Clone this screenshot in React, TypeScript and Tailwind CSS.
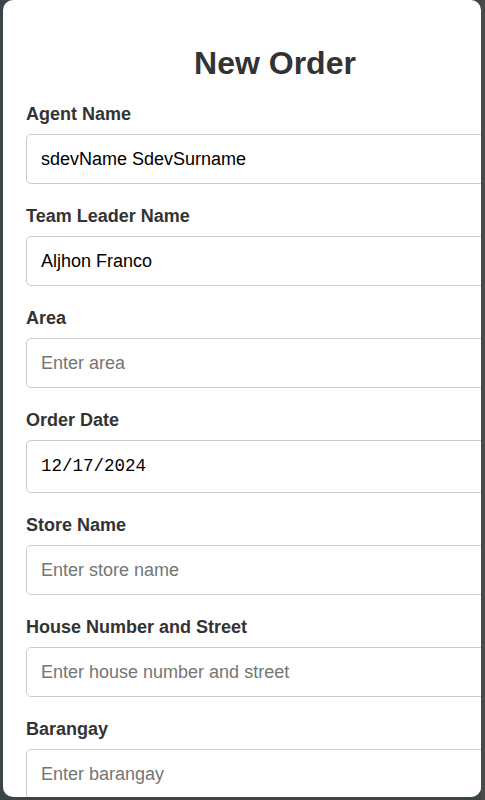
import React from "react";

const fields: { label: string; value?: string; placeholder?: string; date?: boolean }[] = [
  { label: "Agent Name", value: "sdevName SdevSurname" },
  { label: "Team Leader Name", value: "Aljhon Franco" },
  { label: "Area", placeholder: "Enter area" },
  { label: "Order Date", value: "12/17/2024", date: true },
  { label: "Store Name", placeholder: "Enter store name" },
  { label: "House Number and Street", placeholder: "Enter house number and street" },
  { label: "Barangay", placeholder: "Enter barangay" },
];

export default function App() {
  return (
    <div className="flex h-[800px] w-[485px] overflow-hidden bg-[#3b4547]">
      <div className="w-[3px] shrink-0" />
      <div className="relative h-[797px] w-[478px] shrink-0 overflow-hidden rounded-[10px] bg-white">
        <div className="w-[521px] pl-[23px] pt-[45px] font-['Liberation_Sans']">
          <h2 className="mb-[21px] text-center text-[32px] font-bold leading-[37px] text-[#333]">New Order</h2>
          {fields.map((f) => (
            <div key={f.label} className="mb-[21px]">
              <label className="mb-[9px] block text-[18px] font-bold leading-[22px] text-[#333]">{f.label}</label>
              {f.date ? (
                <div className="flex h-[53px] w-[498px] items-center rounded-[5px] border border-[#ccc] bg-white px-[14px] font-['Liberation_Mono'] text-[17.5px] text-black">
                  {f.value}
                </div>
              ) : (
                <input
                  readOnly
                  value={f.value ?? ""}
                  placeholder={f.placeholder}
                  className="block h-[50px] w-[498px] rounded-[5px] border border-[#ccc] bg-white px-[14px] font-['Liberation_Sans'] text-[18px] text-black outline-none placeholder:text-[#757575]"
                />
              )}
            </div>
          ))}
        </div>
      </div>
      <div className="h-full w-[4px] shrink-0 bg-[#4a4a4a]" />
    </div>
  );
}
